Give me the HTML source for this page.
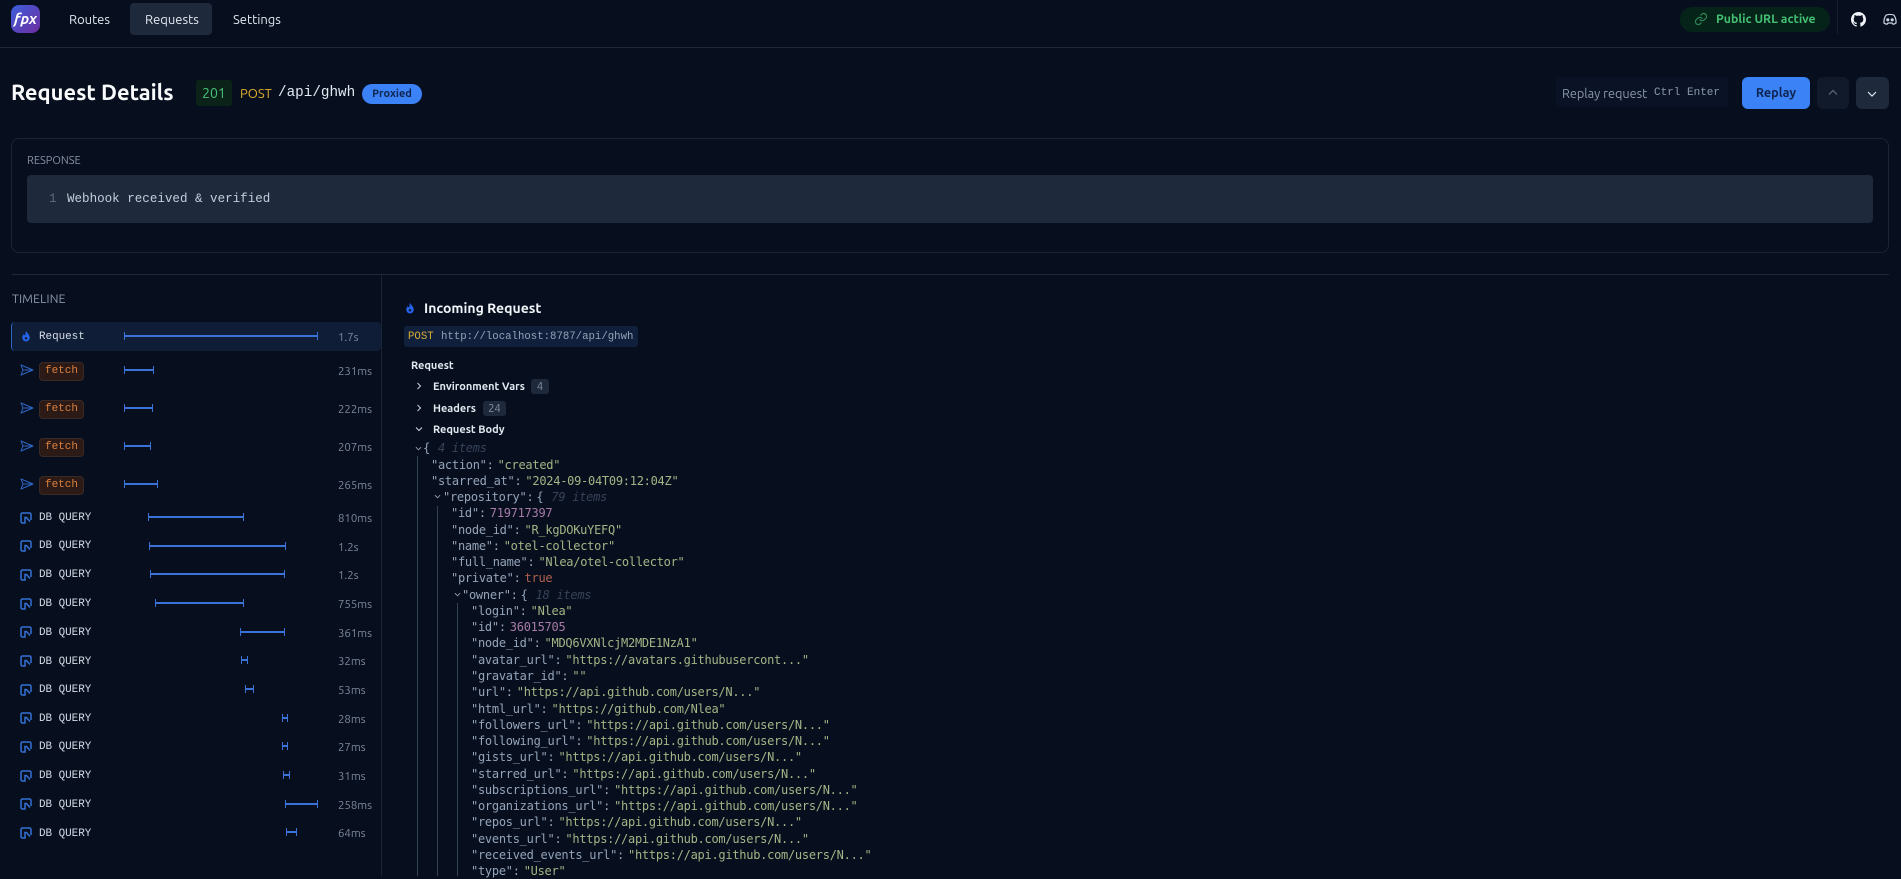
<!DOCTYPE html>
<html lang="en">
<head>
<meta charset="utf-8">
<title>Request Details</title>
<style>
*{box-sizing:border-box}
html,body{margin:0;padding:0;width:1901px;height:876px;overflow:hidden;background:#070f1f;color:#e2e8f0;font-family:"Ubuntu","Liberation Sans",sans-serif}
.a{position:absolute;white-space:nowrap}
.m{font-family:"Liberation Mono",monospace}
.hl{height:1px;background:#1e293b}
.t{position:absolute;left:338px;margin-top:2px;font-size:11.4px;line-height:16px;color:#7c899c;white-space:nowrap}
.l{position:absolute;left:39px;margin-top:2px;font-family:"Liberation Mono",monospace;font-size:10.9px;line-height:14px;color:#d5dde8;white-space:nowrap}
.f{position:absolute;left:39px;margin-top:1px;width:45px;height:19px;background:#2c1a16;border:1px solid #3a2a26;border-radius:4px;font-family:"Liberation Mono",monospace;font-size:11px;line-height:17px;text-align:center;color:#d9803f}
.b{position:absolute;height:2px;background:#3a72d8}
.b:before,.b:after{content:"";position:absolute;top:-3px;width:1px;height:8px;background:#3a72d8}
.b:before{left:0}.b:after{right:0}
.ic{position:absolute}
.ne{margin-top:1px}
#j{position:absolute;left:0;top:440.3px;font-family:"DejaVu Sans Mono",monospace;font-size:12px;letter-spacing:-.27px;line-height:16.27px;color:#94a3b8;white-space:nowrap}
#j div{height:16.27px}
.s,.n,.r{margin-left:4px}
.q{margin-left:3px}
.s{color:#a3b585}.n{color:#a87aa8}.r{color:#b0604c}.i{color:#364256;font-style:italic;margin-left:8px}
.p1{padding-left:431px}.p2{padding-left:443px}.p3{padding-left:451px}.p4{padding-left:462px}.p5{padding-left:471px}
</style>
</head>
<body>
<svg width="0" height="0" style="position:absolute"><defs>
<symbol id="send" viewBox="0 0 14 12"><path d="M1 1l12 5-12 5 2-5zM3 6h10" fill="none" stroke="#2f66c4" stroke-width="1" stroke-linejoin="round"/></symbol>
<symbol id="neon" viewBox="0 0 12 12"><path d="M11 8V2.500A1.500 1.500 0 0 0 9.500 1h-7A1.500 1.500 0 0 0 1 2.500v7A1.500 1.500 0 0 0 2.500 11H5V5.500h1.500L10 9.500" fill="none" stroke="#3472d6" stroke-width="1.500"/></symbol>
<symbol id="flame" viewBox="0 0 12 14"><path d="M6 .5C6.500 3 10.500 5 10.500 9a4.500 4.500 0 0 1-9 0c0-2 1-3.200 2-4.200.3 1 .8 1.500 1.300 1.500C5.800 5 5.300 2.500 6 .5z" fill="#2563eb"/><circle cx="6" cy="9.700" r="1.500" fill="#0f1d36"/></symbol>
</defs></svg>

<!-- Header -->
<div class="a" style="left:11px;top:5px;width:29px;height:28px;border-radius:8px;background:linear-gradient(135deg,#3b5fdc,#6f2da0);color:#fff;font-weight:700;font-style:italic;font-size:15px;line-height:28px;text-align:center">fpx</div>
<div class="a" style="left:69px;top:12px;font-size:13px;line-height:17px;color:#e2e8f0">Routes</div>
<div class="a" style="left:130px;top:3px;width:82px;height:32px;border-radius:4px;background:#1e293b"></div>
<div class="a" style="left:145px;top:12px;font-size:13px;line-height:17px;color:#e2e8f0">Requests</div>
<div class="a" style="left:233px;top:12px;font-size:13px;line-height:17px;color:#e2e8f0">Settings</div>

<div class="a" style="left:1680px;top:7px;width:150px;height:25px;border-radius:13px;background:#06231a"></div>
<svg class="ic" style="left:1694px;top:12px" width="14" height="14" viewBox="0 0 24 24" fill="none" stroke="#2f8a58" stroke-width="2" stroke-linecap="round"><path d="M10 13a5 5 0 0 0 7.500.5l3-3a5 5 0 0 0-7-7l-1.700 1.700"/><path d="M14 11a5 5 0 0 0-7.500-.5l-3 3a5 5 0 0 0 7 7l1.700-1.700"/></svg>
<div class="a" style="left:1716px;top:11px;font-size:12.3px;line-height:17px;font-weight:700;color:#44c073">Public URL active</div>
<div class="a" style="left:1837px;top:0;width:1px;height:34px;background:#141e30"></div>
<svg class="ic" style="left:1851px;top:12px" width="15" height="15" viewBox="0 0 16 16" fill="#f1f5f9"><path d="M8 0C3.580 0 0 3.580 0 8c0 3.540 2.290 6.530 5.470 7.590.4.070.55-.17.55-.38 0-.19-.01-.82-.01-1.490-2.010.37-2.530-.49-2.690-.94-.09-.23-.48-.94-.82-1.130-.28-.15-.68-.52-.01-.53.630-.01 1.080.58 1.230.82.720 1.210 1.870.87 2.330.66.070-.52.280-.87.510-1.070-1.780-.2-3.640-.89-3.640-3.950 0-.87.310-1.590.820-2.150-.08-.2-.36-1.020.08-2.120 0 0 .67-.21 2.200.82.640-.18 1.320-.27 2-.27s1.360.09 2 .27c1.530-1.040 2.200-.82 2.200-.82.44 1.100.16 1.920.08 2.120.51.560.82 1.270.82 2.150 0 3.070-1.870 3.750-3.650 3.950.29.250.54.730.54 1.480 0 1.070-.01 1.930-.01 2.200 0 .21.150.46.550.38A8.010 8.010 0 0 0 16 8c0-4.420-3.580-8-8-8z"/></svg>
<svg class="ic" style="left:1883px;top:13px" width="14" height="13" viewBox="0 0 14 13" fill="none" stroke="#cbd5e1" stroke-width="1.200"><path d="M3 2.200C5 1.200 9 1.200 11 2.200 12.500 4.500 13.300 7 13 10c-1 .8-2 1.200-3 1.300L9 10H5l-1 1.300c-1-.1-2-.5-3-1.300C.7 7 1.500 4.500 3 2.200z"/><circle cx="4.800" cy="6.800" r="1" fill="#cbd5e1"/><circle cx="9.200" cy="6.800" r="1" fill="#cbd5e1"/></svg>
<div class="a hl" style="left:0;top:47px;width:1901px"></div>

<!-- Title row -->
<div class="a" style="left:11px;top:79px;font-size:21.9px;line-height:28px;font-weight:700;color:#f8fafc">Request Details</div>
<div class="a" style="left:196px;top:80px;width:36px;height:26px;background:#0a2218;border-radius:3px;color:#4ac47a;font-size:14px;line-height:26px;text-align:center">201</div>
<div class="a" style="left:240px;top:86px;font-size:13px;line-height:17px;color:#e0ae2e">POST</div>
<div class="a m" style="left:278px;top:85px;font-size:14.3px;line-height:17px;color:#e2e8f0">/api/ghwh</div>
<div class="a" style="left:362px;top:84px;width:60px;height:20px;border-radius:10px;background:#3b82f6;color:#0f2550;font-size:11px;font-weight:700;line-height:21px;text-align:center">Proxied</div>

<div class="a" style="left:1556px;top:77px;width:172px;height:30px;border-radius:4px;background:#0a1326"></div>
<div class="a" style="left:1562px;top:86px;font-size:12.7px;line-height:17px;color:#8b98ab">Replay request</div>
<div class="a m" style="left:1654px;top:86px;font-size:11px;line-height:14px;color:#8a98ac">Ctrl</div>
<div class="a m" style="left:1687px;top:86px;font-size:11px;line-height:14px;color:#8a98ac">Enter</div>
<div class="a" style="left:1742px;top:77px;width:68px;height:32px;border-radius:6px;background:#3b82f6;color:#0f2550;font-size:12.6px;font-weight:700;line-height:33px;text-align:center">Replay</div>
<div class="a" style="left:1817px;top:77px;width:32px;height:32px;border-radius:6px;background:#111a2b"></div>
<svg class="ic" style="left:1827px;top:87px" width="12" height="12" viewBox="0 0 12 12" fill="none" stroke="#5f6b7d" stroke-width="1.200"><path d="M2 7.500l4-4 4 4"/></svg>
<div class="a" style="left:1856px;top:77px;width:33px;height:32px;border-radius:6px;background:#1e293b"></div>
<svg class="ic" style="left:1866px;top:88px" width="12" height="12" viewBox="0 0 12 12" fill="none" stroke="#e2e8f0" stroke-width="1.200"><path d="M2 4l4 4 4-4"/></svg>

<!-- Response -->
<div class="a" style="left:11px;top:138px;width:1878px;height:115px;border:1px solid #1a2435;border-radius:8px"></div>
<div class="a" style="left:27px;top:153px;font-size:11px;line-height:16px;color:#8794a7">RESPONSE</div>
<div class="a" style="left:27px;top:175px;width:1846px;height:48px;background:#1e293b;border-radius:4px"></div>
<div class="a m" style="left:49px;top:191px;font-size:12.56px;line-height:16px;color:#5f6b7d">1</div>
<div class="a m" style="left:67px;top:191px;font-size:12.56px;line-height:16px;color:#c3cddb">Webhook received &amp; verified</div>

<div class="a hl" style="left:12px;top:274px;width:1877px"></div>
<div class="a" style="left:381px;top:274px;width:1px;height:602px;background:#1a2435"></div>

<!-- Timeline -->
<div class="a" style="left:12px;top:291px;font-size:12.5px;line-height:16px;color:#8794a7">TIMELINE</div>
<div class="a" style="left:11px;top:322px;width:370px;height:29px;background:#0f1d36;border-left:1px solid #2f66c4;border-radius:4px"></div>

<svg class="ic" style="left:21px;top:330px" width="10" height="12"><use href="#flame"/></svg>
<div class="l" style="top:328px">Request</div>
<div class="b" style="left:124px;top:335px;width:194px"></div>
<div class="t" style="top:328px">1.7s</div>

<svg class="ic" style="left:20px;top:364px" width="14" height="12"><use href="#send"/></svg>
<div class="f" style="top:361px">fetch</div>
<div class="b" style="left:124px;top:369px;width:30px"></div>
<div class="t" style="top:362px">231ms</div>

<svg class="ic" style="left:20px;top:402px" width="14" height="12"><use href="#send"/></svg>
<div class="f" style="top:399px">fetch</div>
<div class="b" style="left:124px;top:407px;width:29px"></div>
<div class="t" style="top:400px">222ms</div>

<svg class="ic" style="left:20px;top:440px" width="14" height="12"><use href="#send"/></svg>
<div class="f" style="top:437px">fetch</div>
<div class="b" style="left:124px;top:445px;width:27px"></div>
<div class="t" style="top:438px">207ms</div>

<svg class="ic" style="left:20px;top:478px" width="14" height="12"><use href="#send"/></svg>
<div class="f" style="top:475px">fetch</div>
<div class="b" style="left:124px;top:483px;width:34px"></div>
<div class="t" style="top:476px">265ms</div>

<svg class="ic ne" style="left:20px;top:511px" width="12" height="12"><use href="#neon"/></svg>
<div class="l" style="top:509px">DB QUERY</div>
<div class="b" style="left:148px;top:516px;width:96px"></div>
<div class="t" style="top:509px">810ms</div>

<svg class="ic ne" style="left:20px;top:539px" width="12" height="12"><use href="#neon"/></svg>
<div class="l" style="top:537px">DB QUERY</div>
<div class="b" style="left:149px;top:545px;width:137px"></div>
<div class="t" style="top:538px">1.2s</div>

<svg class="ic ne" style="left:20px;top:568px" width="12" height="12"><use href="#neon"/></svg>
<div class="l" style="top:566px">DB QUERY</div>
<div class="b" style="left:150px;top:573px;width:135px"></div>
<div class="t" style="top:566px">1.2s</div>

<svg class="ic ne" style="left:20px;top:597px" width="12" height="12"><use href="#neon"/></svg>
<div class="l" style="top:595px">DB QUERY</div>
<div class="b" style="left:155px;top:602px;width:89px"></div>
<div class="t" style="top:595px">755ms</div>

<svg class="ic ne" style="left:20px;top:625px" width="12" height="12"><use href="#neon"/></svg>
<div class="l" style="top:624px">DB QUERY</div>
<div class="b" style="left:240px;top:631px;width:45px"></div>
<div class="t" style="top:624px">361ms</div>

<svg class="ic ne" style="left:20px;top:654px" width="12" height="12"><use href="#neon"/></svg>
<div class="l" style="top:653px">DB QUERY</div>
<div class="b" style="left:241px;top:659px;width:7px"></div>
<div class="t" style="top:652px">32ms</div>

<svg class="ic ne" style="left:20px;top:683px" width="12" height="12"><use href="#neon"/></svg>
<div class="l" style="top:681px">DB QUERY</div>
<div class="b" style="left:245px;top:688px;width:9px"></div>
<div class="t" style="top:681px">53ms</div>

<svg class="ic ne" style="left:20px;top:711px" width="12" height="12"><use href="#neon"/></svg>
<div class="l" style="top:710px">DB QUERY</div>
<div class="b" style="left:282px;top:717px;width:6px"></div>
<div class="t" style="top:710px">28ms</div>

<svg class="ic ne" style="left:20px;top:740px" width="12" height="12"><use href="#neon"/></svg>
<div class="l" style="top:738px">DB QUERY</div>
<div class="b" style="left:282px;top:745px;width:6px"></div>
<div class="t" style="top:738px">27ms</div>

<svg class="ic ne" style="left:20px;top:769px" width="12" height="12"><use href="#neon"/></svg>
<div class="l" style="top:767px">DB QUERY</div>
<div class="b" style="left:283px;top:774px;width:7px"></div>
<div class="t" style="top:767px">31ms</div>

<svg class="ic ne" style="left:20px;top:797px" width="12" height="12"><use href="#neon"/></svg>
<div class="l" style="top:796px">DB QUERY</div>
<div class="b" style="left:285px;top:803px;width:33px"></div>
<div class="t" style="top:796px">258ms</div>

<svg class="ic ne" style="left:20px;top:826px" width="12" height="12"><use href="#neon"/></svg>
<div class="l" style="top:825px">DB QUERY</div>
<div class="b" style="left:286px;top:831px;width:11px"></div>
<div class="t" style="top:824px">64ms</div>

<!-- Detail panel -->
<svg class="ic" style="left:405px;top:302px" width="10" height="12"><use href="#flame"/></svg>
<div class="a" style="left:424px;top:300px;font-size:14px;line-height:17px;font-weight:700;color:#f1f5f9">Incoming Request</div>
<div class="a" style="left:404px;top:326px;width:234px;height:21px;border-radius:3px;background:#10203c"></div>
<div class="a m" style="left:408px;top:330px;font-size:10.7px;line-height:14px;color:#d9ad36">POST</div>
<div class="a m" style="left:441px;top:330px;font-size:10.7px;line-height:14px;color:#94a3b8">http://localhost:8787/api/ghwh</div>
<div class="a" style="left:411px;top:358px;font-size:11px;line-height:16px;font-weight:700;color:#e2e8f0">Request</div>

<svg class="ic" style="left:415px;top:382px" width="8" height="8" viewBox="0 0 8 8" fill="none" stroke="#cbd5e1" stroke-width="1"><path d="M2.500 1l3 3-3 3"/></svg>
<div class="a" style="left:433px;top:379px;font-size:11px;line-height:16px;font-weight:700;color:#e2e8f0">Environment Vars</div>
<div class="a" style="left:531px;top:379px;width:18px;height:15px;border-radius:3px;background:#1e293b;color:#8794a7;font-size:11px;line-height:16px;text-align:center">4</div>

<svg class="ic" style="left:415px;top:404px" width="8" height="8" viewBox="0 0 8 8" fill="none" stroke="#cbd5e1" stroke-width="1"><path d="M2.500 1l3 3-3 3"/></svg>
<div class="a" style="left:433px;top:401px;font-size:11px;line-height:16px;font-weight:700;color:#e2e8f0">Headers</div>
<div class="a" style="left:483px;top:401px;width:23px;height:15px;border-radius:3px;background:#1e293b;color:#8794a7;font-size:11px;line-height:16px;text-align:center">24</div>

<svg class="ic" style="left:415px;top:425px" width="8" height="8" viewBox="0 0 8 8" fill="none" stroke="#cbd5e1" stroke-width="1"><path d="M1 2.500l3 3 3-3"/></svg>
<div class="a" style="left:433px;top:422px;font-size:11px;line-height:16px;font-weight:700;color:#e2e8f0">Request Body</div>

<!-- JSON guide lines -->
<div class="a" style="left:417px;top:456px;width:1px;height:420px;background:#334155"></div>
<div class="a" style="left:437px;top:506px;width:1px;height:370px;background:#334155"></div>
<div class="a" style="left:457px;top:603px;width:1px;height:273px;background:#334155"></div>
<svg class="ic" style="left:415px;top:445px" width="7" height="7" viewBox="0 0 8 8" fill="none" stroke="#94a3b8" stroke-width="1"><path d="M1 2.500l3 3 3-3"/></svg>
<svg class="ic" style="left:434px;top:493px" width="7" height="7" viewBox="0 0 8 8" fill="none" stroke="#94a3b8" stroke-width="1"><path d="M1 2.500l3 3 3-3"/></svg>
<svg class="ic" style="left:454px;top:591px" width="7" height="7" viewBox="0 0 8 8" fill="none" stroke="#94a3b8" stroke-width="1"><path d="M1 2.500l3 3 3-3"/></svg>

<div id="j">
<div style="padding-left:423px">{<span class="i">4 items</span></div>
<div class="p1">"action":<span class="s">"created"</span></div>
<div class="p1">"starred_at":<span class="s">"2024-09-04T09:12:04Z"</span></div>
<div class="p2">"repository":<span class="q">{</span><span class="i">79 items</span></div>
<div class="p3">"id":<span class="n">719717397</span></div>
<div class="p3">"node_id":<span class="s">"R_kgDOKuYEFQ"</span></div>
<div class="p3">"name":<span class="s">"otel-collector"</span></div>
<div class="p3">"full_name":<span class="s">"Nlea/otel-collector"</span></div>
<div class="p3">"private":<span class="r">true</span></div>
<div class="p4">"owner":<span class="q">{</span><span class="i">18 items</span></div>
<div class="p5">"login":<span class="s">"Nlea"</span></div>
<div class="p5">"id":<span class="n">36015705</span></div>
<div class="p5">"node_id":<span class="s">"MDQ6VXNlcjM2MDE1NzA1"</span></div>
<div class="p5">"avatar_url":<span class="s">"https://avatars.githubusercont..."</span></div>
<div class="p5">"gravatar_id":<span class="s">""</span></div>
<div class="p5">"url":<span class="s">"https://api.github.com/users/N..."</span></div>
<div class="p5">"html_url":<span class="s">"https://github.com/Nlea"</span></div>
<div class="p5">"followers_url":<span class="s">"https://api.github.com/users/N..."</span></div>
<div class="p5">"following_url":<span class="s">"https://api.github.com/users/N..."</span></div>
<div class="p5">"gists_url":<span class="s">"https://api.github.com/users/N..."</span></div>
<div class="p5">"starred_url":<span class="s">"https://api.github.com/users/N..."</span></div>
<div class="p5">"subscriptions_url":<span class="s">"https://api.github.com/users/N..."</span></div>
<div class="p5">"organizations_url":<span class="s">"https://api.github.com/users/N..."</span></div>
<div class="p5">"repos_url":<span class="s">"https://api.github.com/users/N..."</span></div>
<div class="p5">"events_url":<span class="s">"https://api.github.com/users/N..."</span></div>
<div class="p5">"received_events_url":<span class="s">"https://api.github.com/users/N..."</span></div>
<div class="p5">"type":<span class="s">"User"</span></div>
</div>
</body>
</html>
